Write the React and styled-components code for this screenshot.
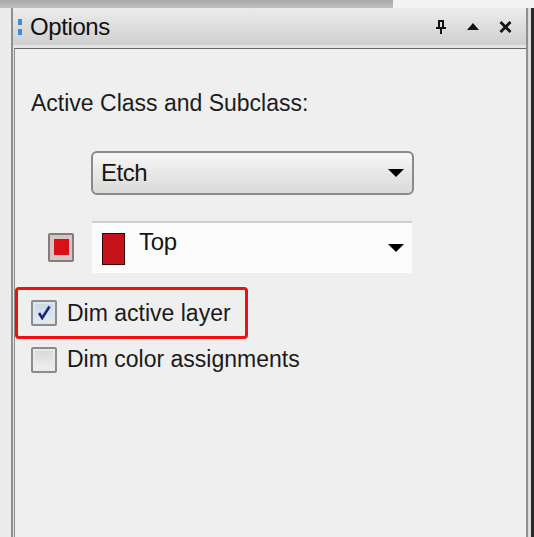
import React from "react";
import styled, { createGlobalStyle } from "styled-components";

const Global = createGlobalStyle`
  html, body { margin: 0; padding: 0; }
  body {
    width: 534px; height: 537px; overflow: hidden;
    background: #ebebeb;
    font-family: "Liberation Sans", Arial, sans-serif;
    color: #1a1a1a;
  }
`;

const Page = styled.div`
  width: 534px; height: 537px;
  display: flex; flex-direction: column;
`;

const TopStrip = styled.div`
  height: 8px; display: flex; flex: none;
  background: #f3f3f3;
`;
const TopGrey = styled.div`
  width: 393px;
  background: linear-gradient(#a9a9a9, #bdbdbd);
`;

const Frame = styled.div`
  flex: 1; display: flex; min-height: 0;
`;
const LeftGutter = styled.div`
  width: 11px; flex: none; background: #ececec;
`;
const RightGutter = styled.div`
  width: 6px; flex: none;
  background: linear-gradient(to right, #dcdcdc 0, #dcdcdc 3px, #2a2a2a 3px);
`;

const Panel = styled.div`
  flex: 1; display: flex; flex-direction: column;
  border-left: 2px solid #8f8f8f;
  border-right: 2px solid #8f8f8f;
  background: #e4e4e4;
`;

const TitleBar = styled.div`
  height: 37px; flex: none;
  display: flex; align-items: center;
  padding: 0 14px 0 5px;
  background: linear-gradient(#ececec, #cfcfcf);
`;
const Grip = styled.div`
  display: flex; flex-direction: column; gap: 4px; margin-right: 8px;
  span { width: 4px; height: 6px; background: #3b8edb; display: block; }
`;
const Title = styled.div`
  font-size: 24px; letter-spacing: -0.4px; color: #111;
  flex: 1;
`;
const TitleIcons = styled.div`
  display: flex; align-items: center; gap: 20px;
`;

const Content = styled.div`
  flex: 1; margin: 3px 0 0 1px;
  border-top: 1px solid #666;
  border-left: 1px solid #8a8a8a;
  background: #efefef;
  display: flex; flex-direction: column;
  padding-top: 41px;
`;

const Label = styled.div`
  font-size: 23px; line-height: 27px; letter-spacing: 0px;
  padding-left: 16px; color: #1c1c1c;
`;

const Select = styled.div`
  margin: 34px 0 0 76px;
  width: 323px; height: 44px; box-sizing: border-box;
  border: 2px solid #8a8a8a; border-radius: 6px;
  background: linear-gradient(#f6f6f6, #dadada);
  display: flex; align-items: center; justify-content: space-between;
  padding: 0 8px 0 8px;
  font-size: 24px; letter-spacing: -0.5px; color: #151515;
`;

const Arrow = styled.div`
  width: 0; height: 0;
  border-left: 8px solid transparent;
  border-right: 8px solid transparent;
  border-top: 8px solid #000;
`;

const LayerRow = styled.div`
  display: flex; align-items: center;
  margin-top: 26px; height: 52px;
`;

const SmallSwatch = styled.div`
  margin-left: 33px;
  width: 26px; height: 29px; box-sizing: border-box;
  border: 2px solid #7e7e7e; border-radius: 2px;
  background: #d9c4c4;
  display: flex; align-items: center; justify-content: center;
  span { width: 15px; height: 16px; background: #d8101a; display: block; }
`;

const LayerField = styled.div`
  margin-left: 18px;
  width: 320px; height: 52px; box-sizing: border-box;
  border-top: 2px solid #cfcfcf;
  background: #fcfcfc;
  display: flex; align-items: center;
  padding: 0 8px 0 10px;
  font-size: 24px; letter-spacing: -0.3px; color: #151515;
`;

const ColorChip = styled.div`
  width: 23px; height: 32px; box-sizing: border-box;
  border: 1px solid #3a0000;
  background: #c4121b;
  margin-right: 14px; margin-top: 2px;
`;

const FieldText = styled.span`
  flex: 1; margin-top: -12px;
`;

const Highlight = styled.div`
  margin-top: 14px; margin-left: 0;
  width: 233px; height: 52px; box-sizing: border-box;
  border: 3px solid #f01010; border-radius: 4px;
  display: flex; align-items: center;
  padding-left: 13px;
`;

const CheckRow = styled.label`
  display: flex; align-items: center; gap: 10px;
  font-size: 23px; letter-spacing: 0px; color: #1a1a1a;
  padding-left: ${p => p.$indent || 0}px;
  margin-top: ${p => p.$top || 0}px;
`;

const Box = styled.span`
  width: 26px; height: 26px; box-sizing: border-box;
  border: 2px solid #8c8c8c; border-radius: 2px;
  background: ${p => p.$checked ? "linear-gradient(#c9d6e4, #e6edf4)" : "linear-gradient(#d6d6d6, #f2f2f2)"};
  display: flex; align-items: center; justify-content: center;
  box-shadow: inset 0 0 0 2px ${p => p.$checked ? "#dde6ef" : "#e9e9e9"};
`;

const Pin = () => (
  <svg width="12" height="14" viewBox="0 0 12 14">
    <rect x="3" y="0" width="6" height="2" fill="#111" />
    <rect x="3" y="1" width="2" height="7" fill="#111" />
    <rect x="7" y="1" width="2" height="7" fill="#111" />
    <rect x="1" y="7" width="10" height="2" fill="#111" />
    <rect x="5" y="9" width="2" height="5" fill="#111" />
  </svg>
);
const Up = () => (
  <svg width="12" height="7" viewBox="0 0 12 7">
    <path d="M0 7 L6 0 L12 7 Z" fill="#111" />
  </svg>
);
const Close = () => (
  <svg width="13" height="12" viewBox="0 0 13 12">
    <path d="M1.5 1 L11.5 11 M11.5 1 L1.5 11" stroke="#111" strokeWidth="2.8" />
  </svg>
);
const Check = () => (
  <svg width="16" height="16" viewBox="0 0 16 16">
    <path d="M3 8 L6.2 13 L13.5 1.5" fill="none" stroke="#1a2a7a" strokeWidth="2.6" />
  </svg>
);

export default function App() {
  return (
    <>
      <Global />
      <Page>
        <TopStrip><TopGrey /></TopStrip>
        <Frame>
          <LeftGutter />
          <Panel>
            <TitleBar>
              <Grip><span /><span /></Grip>
              <Title>Options</Title>
              <TitleIcons>
                <Pin />
                <Up />
                <Close />
              </TitleIcons>
            </TitleBar>
            <Content>
              <Label>Active Class and Subclass:</Label>
              <Select>
                <span>Etch</span>
                <Arrow />
              </Select>
              <LayerRow>
                <SmallSwatch><span /></SmallSwatch>
                <LayerField>
                  <ColorChip />
                  <FieldText>Top</FieldText>
                  <Arrow />
                </LayerField>
              </LayerRow>
              <Highlight>
                <CheckRow>
                  <Box $checked><Check /></Box>
                  Dim active layer
                </CheckRow>
              </Highlight>
              <CheckRow $indent={16} $top={7}>
                <Box />
                Dim color assignments
              </CheckRow>
            </Content>
          </Panel>
          <RightGutter />
        </Frame>
      </Page>
    </>
  );
}
